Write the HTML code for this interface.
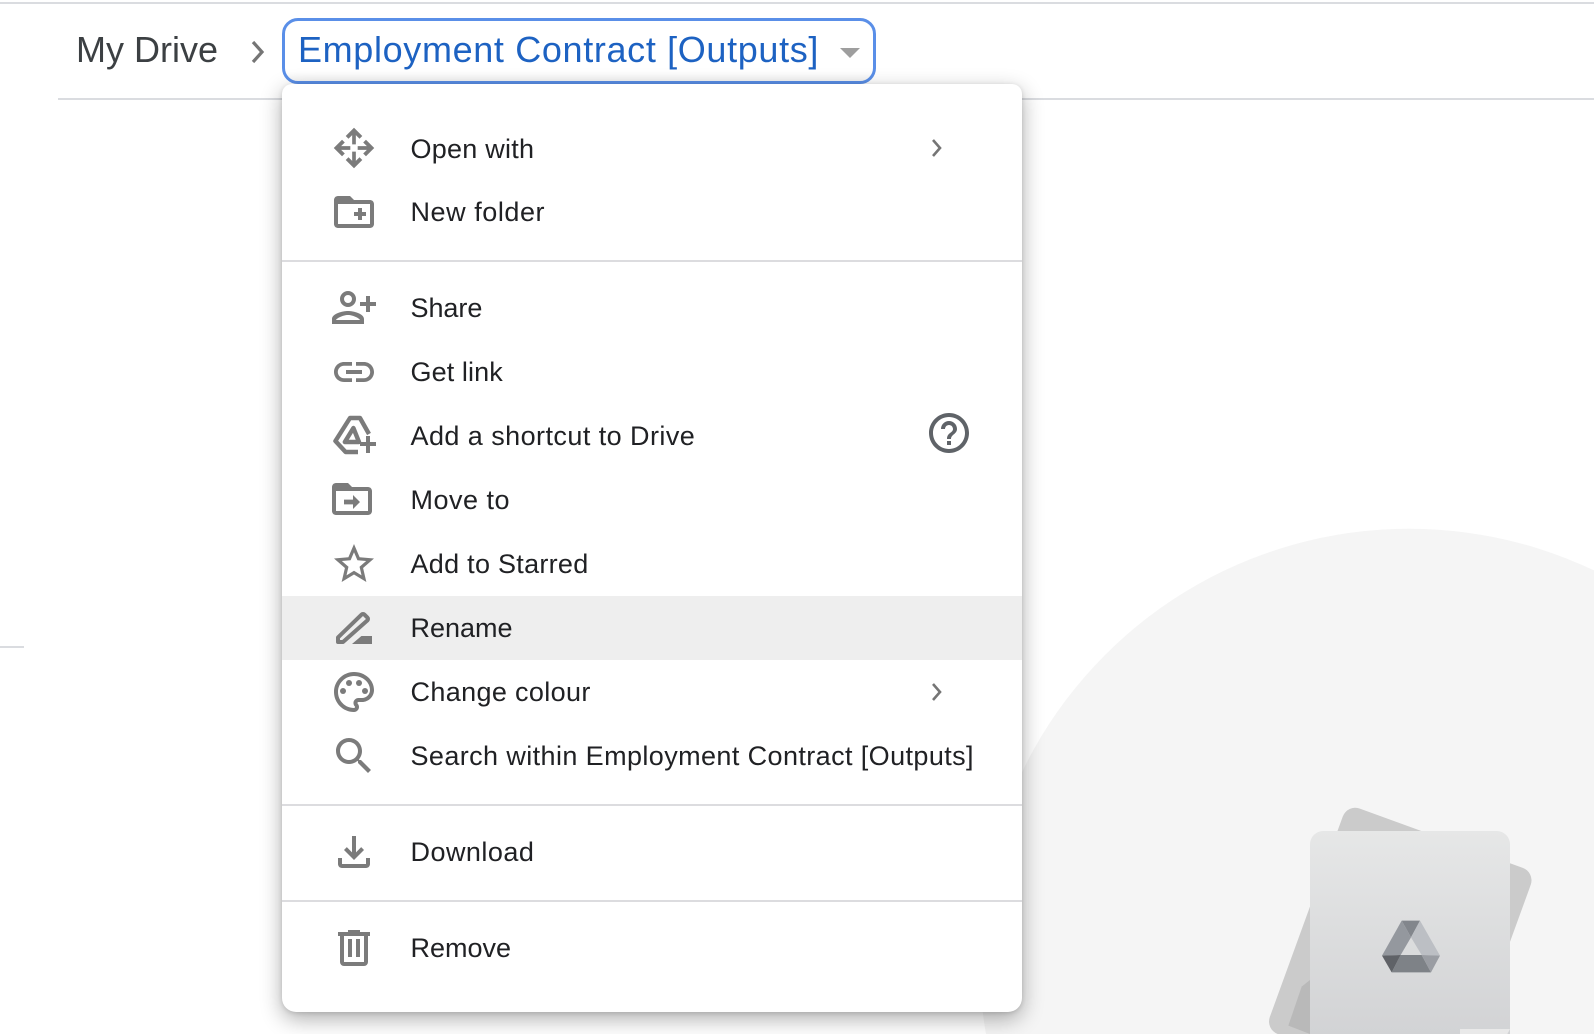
<!DOCTYPE html>
<html><head><meta charset="utf-8">
<style>
html,body{margin:0;padding:0;background:#fff;width:1594px;height:1034px;overflow:hidden}
#p{position:relative;width:1594px;height:1034px;overflow:hidden;background:#fff;font-family:"Liberation Sans",sans-serif}
.abs{position:absolute}
#menu{position:absolute;left:282px;top:84px;width:740px;height:928px;background:#fff;border-radius:10px 10px 14px 14px;box-shadow:0 7px 22px rgba(0,0,0,.32),0 1px 5px rgba(0,0,0,.12)}
.row{position:absolute;left:0;width:740px;height:64px}
.row span{position:absolute;left:128.500px;top:0;line-height:64px;font-size:27px;color:#202124;white-space:nowrap}
.row svg.i{position:absolute;left:48px;top:8px;width:48px;height:48px;fill:#7b7b7b}
.hr{position:absolute;left:0;width:740px;height:2px;background:#dcdcdf}
</style></head><body>
<div id="p">
<div class="abs" style="left:0;top:2px;width:1594px;height:2px;background:#dadce0"></div>
<div class="abs" style="left:58px;top:98px;width:1536px;height:2px;background:#dadce0"></div>
<div class="abs" style="left:0;top:646px;width:24px;height:2px;background:#dadce0"></div>
<svg class="abs" style="left:0;top:0" width="1594" height="1034" viewBox="0 0 1594 1034"><path d="M986 1034A430 430 0 0 1 1594 570.400V1034z" fill="#f5f5f5"/></svg>
<svg class="abs" style="left:1230px;top:780px" width="364" height="254" viewBox="0 0 1092 762">
<defs><linearGradient id="g" x1="0" y1="0" x2="0" y2="1"><stop offset="0" stop-color="#e6e7e7"/><stop offset="1" stop-color="#d2d3d5"/></linearGradient></defs>
<path d="M338.300 109.600A40 40 0 0 1 389.600 85.700L878.200 263.500A40 40 0 0 1 902.100 314.800L739.400 762H143A40 40 0 0 1 119.400 711z" fill="#cbcbcb"/>
<polygon points="240,600 215,620 175,737 240,762" fill="#b9b9b9"/>
<path d="M240 762V193a40 40 0 0 1 40-40H800a40 40 0 0 1 40 40V762z" fill="url(#g)"/>
<polygon points="690,747 840,747 832,762 690,762" fill="#e9e9e9"/>
<polygon points="515,422 570,422 543,472" fill="#82868c"/>
<polygon points="515,422 543,472 512,525 456,527" fill="#94989e"/>
<polygon points="570,422 630,527 575,525 543,472" fill="#bcbfc4"/>
<polygon points="512,525 575,525 603,577 485,577" fill="#7e8287"/>
<polygon points="456,527 512,525 485,577" fill="#5f6267"/>
<polygon points="575,525 630,527 603,577" fill="#9a9da3"/>
</svg>
<div class="abs" style="left:76px;top:20px;line-height:60px;font-size:36px;color:#3c4043;white-space:nowrap">My Drive</div>
<svg class="abs" style="left:250px;top:40px" width="16" height="24" viewBox="0 0 16 24"><path d="M3 2l9 10-9 10" fill="none" stroke="#757575" stroke-width="3.200"/></svg>
<div class="abs" style="left:282px;top:18px;width:594px;height:66px;box-sizing:border-box;border:3px solid #5a8fe8;border-radius:16px;background:linear-gradient(#fff 85%,#f4f4f4)"></div>
<div class="abs" style="left:298px;top:20px;line-height:60px;font-size:36px;letter-spacing:.65px;color:#1d62c2;white-space:nowrap">Employment Contract [Outputs]</div>
<div class="abs" style="left:840px;top:48px;width:0;height:0;border-left:10px solid transparent;border-right:10px solid transparent;border-top:10px solid #9e9e9e"></div>
<div id="menu">
<div class="row" style="top:32px"><svg class="i" viewBox="0 0 24 24"><g transform="translate(12 12) scale(.92) translate(-12 -12)"><g id="a"><path d="M12 1l4.500 4.500L15 7l-2-2v5h-2V5L9 7 7.500 5.500z"/></g><use href="#a" transform="rotate(90 12 12)"/><use href="#a" transform="rotate(180 12 12)"/><use href="#a" transform="rotate(270 12 12)"/></g></svg><span style="letter-spacing:.24px;top:1px">Open with</span>
<svg class="abs" style="left:648px;top:22px" width="14" height="20" viewBox="0 0 14 20"><path d="M3 2l7 8-7 8" fill="none" stroke="#757575" stroke-width="2.600"/></svg></div>
<div class="row" style="top:96px"><svg class="i" viewBox="0 0 24 24"><path fill-rule="evenodd" d="M10 4H4c-1.100 0-2 .900-2 2v12c0 1.100.900 2 2 2h16c1.100 0 2-.900 2-2V8c0-1.100-.900-2-2-2h-8l-2-2zM4 8h16v10H4V8zM14 10h2v2h2v2h-2v2h-2v-2h-2v-2h2z"/></svg><span style="letter-spacing:.55px">New folder</span></div>
<div class="hr" style="top:176px"></div>
<div class="row" style="top:192px"><svg class="i" viewBox="0 0 24 24"><path fill-rule="evenodd" d="M9 3.500a4 4 0 1 0 0 8 4 4 0 0 0 0-8zm0 2a2 2 0 1 1 0 4 2 2 0 0 1 0-4zM9 13.500c-2.670 0-8 1.340-8 4v2.500h16v-2.500c0-2.660-5.330-4-8-4zM3 18c.220-.720 3.310-2.500 6-2.500 2.700 0 5.800 1.790 6 2.500H3z"/><path d="M18 6h2v3h3v2h-3v3h-2v-3h-3V9h3z"/></svg><span style="letter-spacing:-.05px">Share</span></div>
<div class="row" style="top:256px"><svg class="i" viewBox="0 0 24 24"><path d="M3.900 12c0-1.710 1.390-3.100 3.100-3.100h4V7H7c-2.760 0-5 2.240-5 5s2.240 5 5 5h4v-1.900H7c-1.710 0-3.100-1.390-3.100-3.100zM8 13h8v-2H8v2zm9-6h-4v1.900h4c1.710 0 3.100 1.390 3.100 3.100s-1.390 3.100-3.100 3.100h-4V17h4c2.760 0 5-2.240 5-5s-2.240-5-5-5z"/></svg><span style="letter-spacing:.1px">Get link</span></div>
<div class="row" style="top:320px"><svg class="i" viewBox="0 0 24 24"><path d="M19.500 11L15 3H10L2.700 14.500 7.800 20H14M11.700 8l-4.300 7H14.500z" fill="none" stroke="#7b7b7b" stroke-width="2.200" stroke-linejoin="round"/><path d="M18 12h2v3h3v2h-3v3.500h-2V17h-3v-2h3z"/></svg><span style="letter-spacing:.44px">Add a shortcut to Drive</span>
<svg class="abs" style="left:643px;top:5px;fill:#5f6368" width="48" height="48" viewBox="0 0 24 24"><path d="M11 18h2v-2h-2v2zm1-16C6.480 2 2 6.480 2 12s4.480 10 10 10 10-4.480 10-10S17.520 2 12 2zm0 18c-4.410 0-8-3.590-8-8s3.590-8 8-8 8 3.590 8 8-3.590 8-8 8zm0-14c-2.210 0-4 1.790-4 4h2c0-1.100.900-2 2-2s2 .900 2 2c0 2-3 1.750-3 5h2c0-2.250 3-2.500 3-5 0-2.210-1.790-4-4-4z"/></svg></div>
<div class="row" style="top:384px"><svg class="i" viewBox="0 0 24 24"><path fill-rule="evenodd" transform="translate(-1,-.5)" d="M10 4H4c-1.100 0-2 .900-2 2v12c0 1.100.900 2 2 2h16c1.100 0 2-.900 2-2V8c0-1.100-.900-2-2-2h-8l-2-2zM4 8h16v10H4V8zM8 12.300h4.500V10l3.500 3.500-3.500 3.500v-2.300H8z"/></svg><span style="letter-spacing:.5px">Move to</span></div>
<div class="row" style="top:448px"><svg class="i" viewBox="0 0 24 24"><path d="M22 9.240l-7.190-.620L12 2 9.190 8.630 2 9.240l5.460 4.730L5.820 21 12 17.270 18.180 21l-1.630-7.030L22 9.240zM12 15.400l-3.760 2.270 1-4.280-3.320-2.880 4.380-.380L12 6.100l1.710 4.040 4.380.380-3.320 2.880 1 4.280L12 15.400z"/></svg><span style="letter-spacing:.28px">Add to Starred</span></div>
<div class="row" style="top:512px;background:#eeeeee"><svg class="i" viewBox="0 0 24 24"><path d="M4 19v-2.300L15.800 5.300c.400-.400 1-.400 1.400 0l1.500 1.500c.400.400.400 1 0 1.400L6.500 19z" fill="none" stroke="#7b7b7b" stroke-width="2" stroke-linejoin="round"/><path d="M11 20l4.700-4H21v4z"/></svg><span style="letter-spacing:0">Rename</span></div>
<div class="row" style="top:576px"><svg class="i" viewBox="0 0 24 24"><path d="M12 22C6.490 22 2 17.510 2 12S6.490 2 12 2s10 4.040 10 9c0 3.310-2.690 6-6 6h-1.770c-.280 0-.500.220-.500.500 0 .120.050.230.130.330.410.470.640 1.060.640 1.670 0 1.380-1.120 2.500-2.500 2.500zm0-18c-4.410 0-8 3.590-8 8s3.590 8 8 8c.280 0 .500-.220.500-.500 0-.160-.080-.280-.140-.350-.410-.460-.630-1.050-.630-1.650 0-1.380 1.120-2.500 2.500-2.500H16c2.210 0 4-1.790 4-4 0-3.860-3.590-7-8-7z"/><circle cx="6.500" cy="11.500" r="1.500"/><circle cx="9.500" cy="7.500" r="1.500"/><circle cx="14.500" cy="7.500" r="1.500"/><circle cx="17.500" cy="11.500" r="1.500"/></svg><span style="letter-spacing:.35px">Change colour</span>
<svg class="abs" style="left:648px;top:22px" width="14" height="20" viewBox="0 0 14 20"><path d="M3 2l7 8-7 8" fill="none" stroke="#757575" stroke-width="2.600"/></svg></div>
<div class="row" style="top:640px"><svg class="i" viewBox="0 0 24 24"><path d="M15.500 14h-.790l-.280-.270C15.410 12.590 16 11.110 16 9.500 16 5.910 13.090 3 9.500 3S3 5.910 3 9.500 5.910 16 9.500 16c1.610 0 3.090-.590 4.230-1.570l.270.280v.790l5 4.990L20.490 19l-4.990-5zm-6 0C7.010 14 5 11.990 5 9.500S7.010 5 9.500 5 14 7.010 14 9.500 11.990 14 9.500 14z"/></svg><span style="letter-spacing:.4px">Search within Employment Contract [Outputs]</span></div>
<div class="hr" style="top:720px"></div>
<div class="row" style="top:736px"><svg class="i" viewBox="0 0 24 24"><path d="M18 15v3H6v-3H4v3c0 1.100.900 2 2 2h12c1.100 0 2-.900 2-2v-3h-2zm-1-4l-1.410-1.410L13 12.170V4h-2v8.170L8.410 9.590 7 11l5 5 5-5z"/></svg><span style="letter-spacing:.47px">Download</span></div>
<div class="hr" style="top:816px"></div>
<div class="row" style="top:832px"><svg class="i" viewBox="0 0 24 24"><path fill-rule="evenodd" d="M9 3h6v1h5v2h-1v13a2 2 0 0 1-2 2H7a2 2 0 0 1-2-2V6H4V4h5zM7 6v13h10V6z"/><rect x="9" y="7.500" width="2" height="9"/><rect x="13" y="7.500" width="2" height="9"/></svg><span style="letter-spacing:0">Remove</span></div>
</div>
</div>
</body></html>
